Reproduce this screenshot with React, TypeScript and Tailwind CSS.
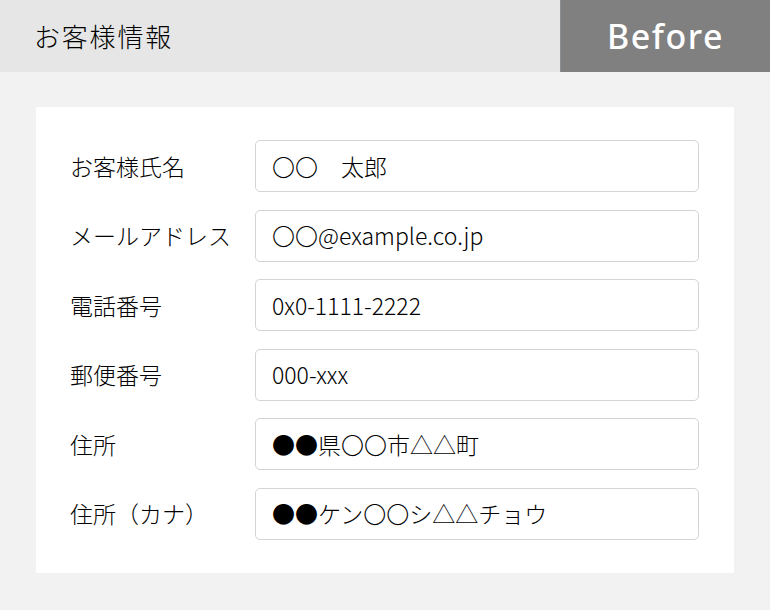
import React from "react";

const rows: [string, string][] = [
  ["お客様氏名", "〇〇　太郎"],
  ["メールアドレス", "〇〇@example.co.jp"],
  ["電話番号", "0x0-1111-2222"],
  ["郵便番号", "000-xxx"],
  ["住所", "●●県〇〇市△△町"],
  ["住所（カナ）", "●●ケン〇〇シ△△チョウ"],
];

export default function App() {
  return (
    <div
      className="w-[770px] h-[610px] bg-[#f2f2f2] text-black"
      style={{ fontFamily: '"Noto Sans CJK JP", "Noto Sans", sans-serif' }}
    >
      <div className="flex h-[72px] bg-[#e6e6e6]">
        <div className="flex-1 flex items-center pl-[34px] text-[26px] tracking-[1.8px] font-light pb-[1px]">お客様情報</div>
        <div
          className="w-[210px] bg-[#808080] border-l border-[#8a8f94] flex items-center justify-center text-white text-[34px] font-medium tracking-[1.5px]"
          style={{ fontFamily: '"Noto Sans", sans-serif' }}
        >
          Before
        </div>
      </div>
      <div className="pt-[35px] px-[36px]">
        <div className="bg-white pt-[33px] pb-[33px] pl-[34px] pr-[35px] flex flex-col gap-[17.5px]">
          {rows.map(([label, value]) => (
            <div key={label} className="flex items-center">
              <div className="w-[185px] text-[23px] font-light">{label}</div>
              <div className="flex-1 h-[52px] border border-[#d4d4d4] rounded-[5px] flex items-center pl-[16px] text-[23px] font-light">
                {value}
              </div>
            </div>
          ))}
        </div>
      </div>
    </div>
  );
}
